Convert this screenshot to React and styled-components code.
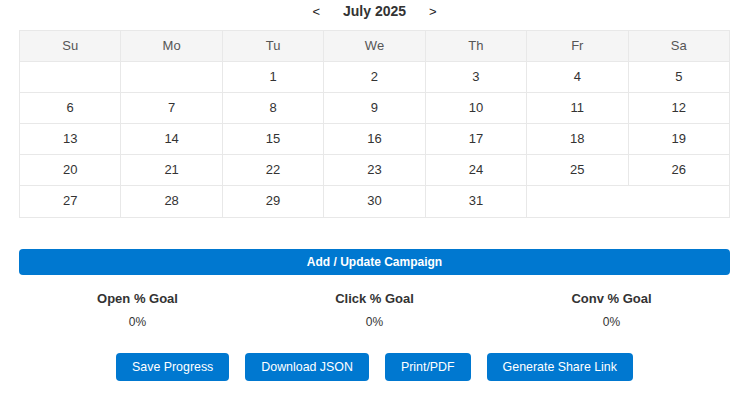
import React, { useState } from "react";
import styled, { createGlobalStyle } from "styled-components";

const GlobalStyle = createGlobalStyle`
  body {
    margin: 0;
    background: #fff;
    font-family: "Liberation Sans", Arial, sans-serif;
    color: #333;
  }
`;

const MONTHS = [
  "January", "February", "March", "April", "May", "June",
  "July", "August", "September", "October", "November", "December",
];
const DAYS = ["Su", "Mo", "Tu", "We", "Th", "Fr", "Sa"];

const buildWeeks = (year, month) => {
  const first = new Date(year, month, 1).getDay();
  const total = new Date(year, month + 1, 0).getDate();
  const cells = [];
  for (let i = 0; i < first; i++) cells.push({ day: null });
  for (let d = 1; d <= total; d++) cells.push({ day: d });
  const weeks = [];
  for (let i = 0; i < cells.length; i += 7) weeks.push(cells.slice(i, i + 7));
  return weeks;
};

const App = () => {
  const [view, setView] = useState({ year: 2025, month: 6 });
  const weeks = buildWeeks(view.year, view.month);

  const shift = (n) => {
    const d = new Date(view.year, view.month + n, 1);
    setView({ year: d.getFullYear(), month: d.getMonth() });
  };

  const goals = [
    { label: "Open % Goal", value: 0 },
    { label: "Click % Goal", value: 0 },
    { label: "Conv % Goal", value: 0 },
  ];

  return (
    <>
      <GlobalStyle />
      <Page>
        <MonthNav>
          <NavButton onClick={() => shift(-1)}>&lt;</NavButton>
          <MonthTitle>
            {MONTHS[view.month]} {view.year}
          </MonthTitle>
          <NavButton onClick={() => shift(1)}>&gt;</NavButton>
        </MonthNav>

        <Calendar>
          <thead>
            <tr>
              {DAYS.map((d) => (
                <HeadCell key={d}>{d}</HeadCell>
              ))}
            </tr>
          </thead>
          <tbody>
            {weeks.map((week, wi) => (
              <tr key={wi}>
                {week.map((c, ci) => (
                  <DayCell key={ci}>{c.day}</DayCell>
                ))}
                {week.length < 7 && <DayCell colSpan={7 - week.length} />}
              </tr>
            ))}
          </tbody>
        </Calendar>

        <WideButton>Add / Update Campaign</WideButton>

        <Goals>
          {goals.map((g) => (
            <Goal key={g.label}>
              <GoalLabel>{g.label}</GoalLabel>
              <GoalValue>{g.value}%</GoalValue>
            </Goal>
          ))}
        </Goals>

        <Actions>
          <ActionButton>Save Progress</ActionButton>
          <ActionButton>Download JSON</ActionButton>
          <ActionButton>Print/PDF</ActionButton>
          <ActionButton>Generate Share Link</ActionButton>
        </Actions>
      </Page>
    </>
  );
};

const Page = styled.div`
  display: flex;
  flex-direction: column;
  padding: 0 16px 0 19px;
`;

const MonthNav = styled.div`
  display: flex;
  align-items: center;
  justify-content: center;
  height: 22px;
  margin-bottom: 8px;
  gap: 8px;
`;

const NavButton = styled.button`
  background: none;
  border: none;
  padding: 0 6px;
  font-family: inherit;
  font-size: 13px;
  color: #222;
  cursor: pointer;
`;

const MonthTitle = styled.span`
  font-size: 14px;
  font-weight: bold;
  color: #333;
  padding: 0 9px;
`;

const Calendar = styled.table`
  width: 100%;
  border-collapse: collapse;
  table-layout: fixed;
`;

const HeadCell = styled.th`
  border: 1px solid #e8e8e8;
  background: #f5f5f5;
  color: #555;
  font-weight: normal;
  font-size: 13px;
  line-height: 14px;
  padding: 8px 0 8.1px;
  text-align: center;
`;

const DayCell = styled.td`
  border: 1px solid #e8e8e8;
  color: #333;
  font-size: 13px;
  line-height: 14px;
  height: 14px;
  padding: 8px 0 8.1px;
  text-align: center;
`;

const WideButton = styled.button`
  margin-top: 31px;
  height: 26px;
  width: 100%;
  border: none;
  border-radius: 4px;
  background: #0078d0;
  color: #fff;
  font-family: inherit;
  font-size: 12px;
  font-weight: bold;
  cursor: pointer;
`;

const Goals = styled.div`
  display: grid;
  grid-template-columns: repeat(3, 1fr);
  margin-top: 16px;
`;

const Goal = styled.div`
  display: flex;
  flex-direction: column;
  align-items: center;
  gap: 9px;
`;

const GoalLabel = styled.div`
  font-size: 13px;
  line-height: 15px;
  font-weight: bold;
  color: #333;
`;

const GoalValue = styled.div`
  font-size: 12px;
  line-height: 14px;
  color: #333;
`;

const Actions = styled.div`
  display: flex;
  justify-content: center;
  gap: 16px;
  margin-top: 24px;
`;

const ActionButton = styled.button`
  height: 28px;
  padding: 0 16px;
  border: none;
  border-radius: 4px;
  background: #0078d0;
  color: #fff;
  font-family: inherit;
  font-size: 12.4px;
  cursor: pointer;
`;

export default App;
